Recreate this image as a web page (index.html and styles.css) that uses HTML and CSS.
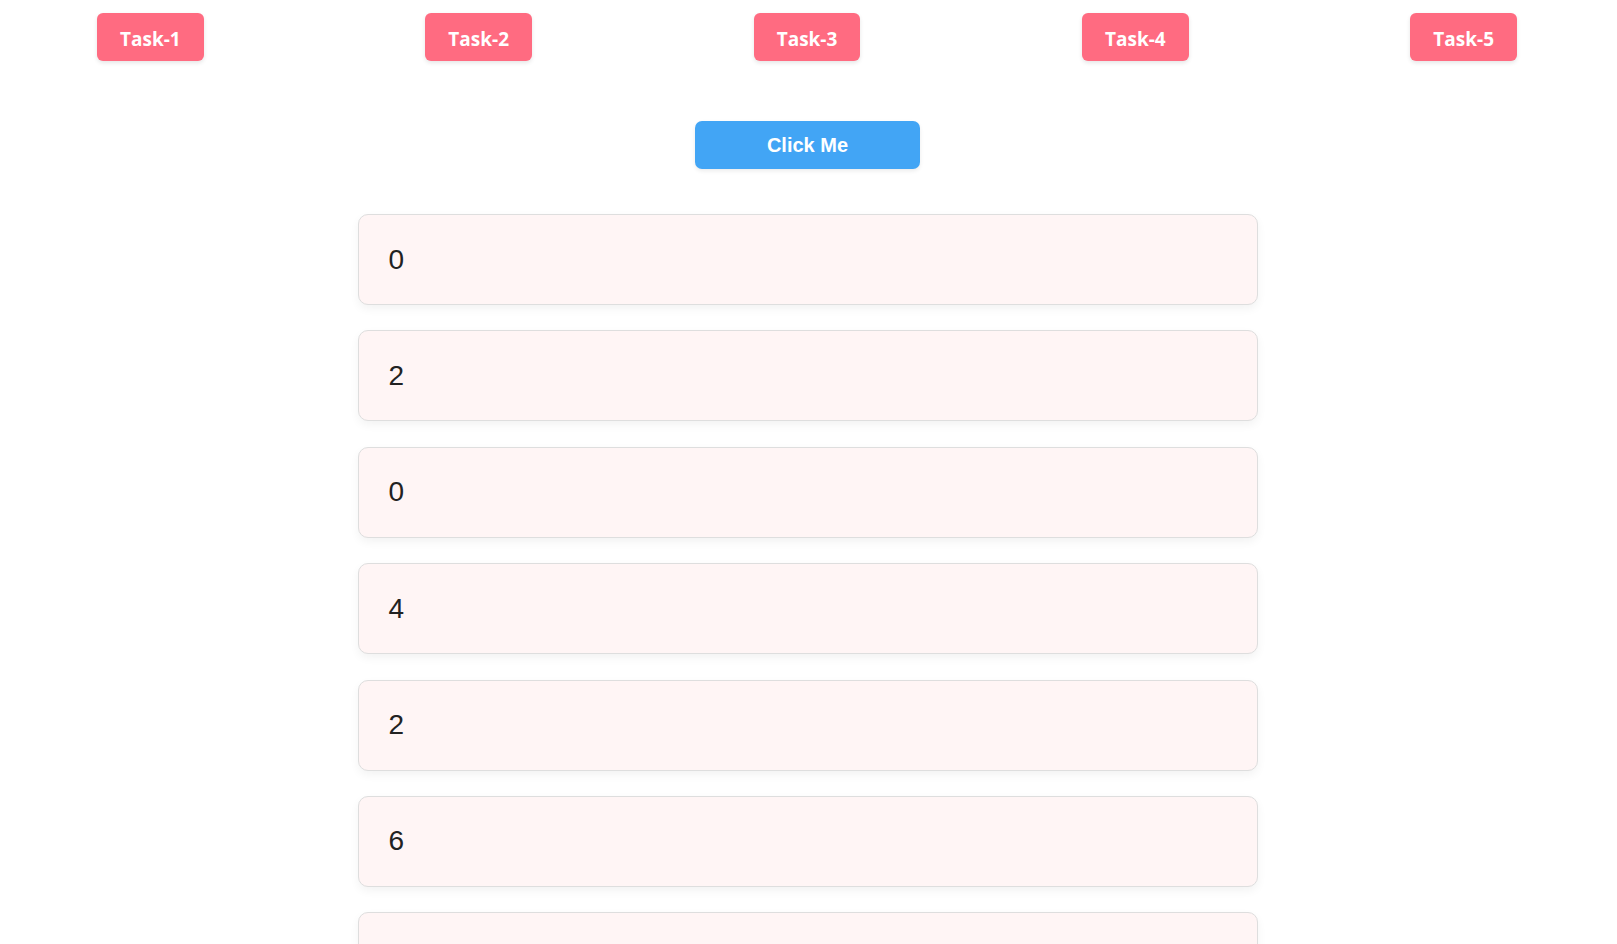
FILE: index.html
```html
<!DOCTYPE html>
<html lang="en">
<head>
<meta charset="utf-8">
<title>Tasks</title>
<link rel="stylesheet" href="styles.css">
</head>
<body>
<nav class="nav">
  <button class="task">Task-1</button>
  <button class="task">Task-2</button>
  <button class="task">Task-3</button>
  <button class="task">Task-4</button>
  <button class="task">Task-5</button>
</nav>
<div class="action">
  <button class="click">Click Me</button>
</div>
<ul class="list">
  <li class="card">0</li>
  <li class="card">2</li>
  <li class="card">0</li>
  <li class="card">4</li>
  <li class="card">2</li>
  <li class="card">6</li>
  <li class="card"></li>
</ul>
</body>
</html>
```
FILE: styles.css
```css
* { box-sizing: border-box; }
html, body { margin: 0; padding: 0; background: #ffffff; }
body {
  font-family: "Liberation Sans", Arial, sans-serif;
  color: #222;
  padding-right: 2px;
}

.nav {
  display: flex;
  justify-content: space-between;
  padding: 13px 98px 0 97px;
}
.task {
  height: 48px;
  padding: 3px 23px 0;
  border: none;
  border-radius: 6px;
  background: #ff6b81;
  color: #ffffff;
  font-family: "Open Sans", "Noto Sans", sans-serif;
  font-weight: 700;
  font-size: 19px;
  box-shadow: 0 2px 4px rgba(0, 0, 0, 0.1);
}

.action {
  display: flex;
  justify-content: center;
  margin-top: 60px;
}
.click {
  width: 225px;
  height: 48px;
  padding-top: 1px;
  border: none;
  border-radius: 7px;
  background: #42a5f5;
  color: #ffffff;
  font-family: "Liberation Sans", Arial, sans-serif;
  font-weight: 700;
  font-size: 20px;
  box-shadow: 0 2px 4px rgba(0, 0, 0, 0.08);
}

.list {
  list-style: none;
  width: 900px;
  margin: 45px auto 0;
  padding: 0;
  display: flex;
  flex-direction: column;
  gap: 25.4px;
}
.card {
  height: 91px;
  flex-shrink: 0;
  display: flex;
  align-items: center;
  padding: 0 30px;
  background: #fff5f5;
  border: 1px solid #dedede;
  border-radius: 10px;
  box-shadow: 0 4px 10px rgba(0, 0, 0, 0.05);
  font-size: 28px;
  color: #222;
}
```
